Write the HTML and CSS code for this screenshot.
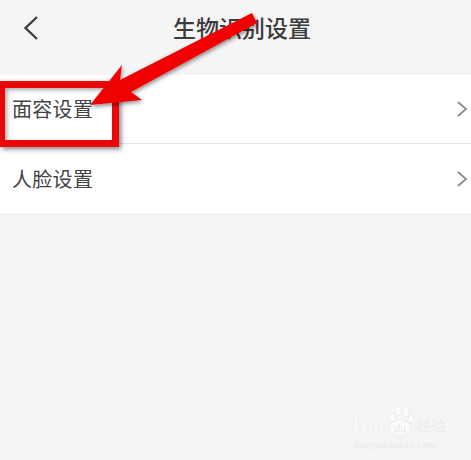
FILE: index.html
```html
<!DOCTYPE html>
<html lang="zh">
<head>
<meta charset="utf-8">
<title>生物识别设置</title>
<link rel="stylesheet" href="styles.css">
</head>
<body>
<div class="screen">
  <header class="nav">
    <svg class="back" viewBox="0 0 20 26" width="20" height="26"><path d="M16 2 L4.5 13 L16 24" fill="none" stroke="#3f3f3f" stroke-width="2.4"/></svg>
    <h1 class="title">生物识别设置</h1>
  </header>
  <section class="card">
    <div class="row">
      <span class="label">面容设置</span>
      <svg class="chev" viewBox="0 0 12 18" width="12" height="18"><path d="M2 2 L10 9 L2 16" fill="none" stroke="#8c8c8c" stroke-width="1.8"/></svg>
    </div>
    <div class="row">
      <span class="label">人脸设置</span>
      <svg class="chev" viewBox="0 0 12 18" width="12" height="18"><path d="M2 2 L10 9 L2 16" fill="none" stroke="#8c8c8c" stroke-width="1.8"/></svg>
    </div>
  </section>
  <div class="highlight"></div>
  <svg class="arrow" viewBox="0 0 471 460" width="471" height="460">
    <defs><filter id="sh" x="-20%" y="-20%" width="140%" height="140%"><feDropShadow dx="1" dy="2" stdDeviation="2" flood-color="#000" flood-opacity=".45"/></filter></defs>
    <polygon points="90,105 122,65 120,80 252,13 257,23 131,92 142,100" fill="#f00000" filter="url(#sh)"/>
  </svg>
  <div class="mark">
    <div class="mark-top">
      <span class="mark-bai">Bai</span>
      <svg class="paw" viewBox="0 0 30 32" width="30" height="32"><g fill="#fbfbfb" stroke="#ececec" stroke-width="1"><ellipse cx="7" cy="12" rx="3.5" ry="4.5"/><ellipse cx="13" cy="6" rx="3.5" ry="4.5"/><ellipse cx="21" cy="7" rx="3.5" ry="4.5"/><ellipse cx="26" cy="14" rx="3" ry="4"/><ellipse cx="15" cy="23" rx="11" ry="8"/></g><text x="15" y="27" font-size="11" font-family="Liberation Sans" fill="#e8e8e8" text-anchor="middle">du</text></svg>
      <span class="mark-cn">经验</span>
    </div>
    <div class="mark-url">jingyan.baidu.com</div>
  </div>
</div>
</body>
</html>
```
FILE: styles.css
```css
* { box-sizing: border-box; margin: 0; padding: 0; }
html, body { width: 471px; height: 460px; overflow: hidden; }
body { background: #f5f5f5; font-family: "Noto Sans CJK SC", "Liberation Sans", sans-serif; }
.screen { position: relative; width: 471px; height: 460px; }
.nav { position: relative; height: 75px; padding-bottom: 21px; display: flex; align-items: center; justify-content: center; }
.back { position: absolute; left: 21px; top: 15px; }
.title { font-size: 23px; font-weight: 500; color: #3c3c3c; margin-left: 13px; line-height: 54px; }
.card { background: #fff; }
.row { height: 69px; display: flex; align-items: center; justify-content: space-between; padding: 0 3px 0 12px; }
.row:first-child { border-bottom: 1px solid #e6e6e6; }
.label { font-size: 20px; color: #444; line-height: 1; letter-spacing: .3px; }
.highlight { position: absolute; left: 0; top: 81px; width: 119px; height: 66px; border: solid #e80808; border-width: 7px 7px 7px 5px; box-shadow: 2px 2px 5px rgba(0,0,0,.5), inset 2px 2px 4px rgba(0,0,0,.35); }
.arrow { position: absolute; left: 0; top: 0; }
.mark { position: absolute; left: 353px; top: 405px; width: 104px; }
.mark-top { display: flex; align-items: flex-end; height: 30px; }
.mark-bai { font: 700 19px/22px "Liberation Sans", sans-serif; color: #fcfcfc; -webkit-text-stroke: .5px #ebebeb; width: 36px; letter-spacing: 1px; }
.paw { flex: none; margin-bottom: -2px; margin-left: -4px; }
.mark-cn { font-size: 15px; line-height: 20px; color: #ebebeb; margin-left: 1px; }
.mark-url { font: 700 10px/14px "Liberation Serif", serif; color: #ececec; margin-top: 3px; letter-spacing: .2px; white-space: nowrap; }
```
